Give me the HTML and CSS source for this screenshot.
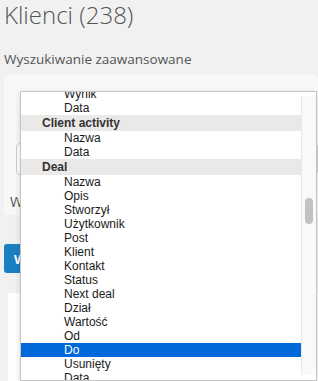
FILE: index.html
```html
<!DOCTYPE html>
<html lang="pl">
<head>
    <meta charset="UTF-8">
    <meta name="viewport" content="width=device-width, initial-scale=1.0">
    <title>Klienci</title>
    <link rel="stylesheet" href="styles.css">
</head>
<body>
    <div class="page">
        <h1 class="title">Klienci (238)</h1>
        <h2 class="subtitle">Wyszukiwanie zaawansowane</h2>
        <div class="search-panel">
            <div class="select-box"></div>
            <div class="field-label">Wartość</div>
        </div>
        <button class="search-btn">Wyszukaj</button>
        <div class="results"></div>
    </div>

    <div class="dropdown">
        <ul class="options">
            <li class="item">Wynik</li>
            <li class="item">Data</li>
            <li class="group">Client activity</li>
            <li class="item">Nazwa</li>
            <li class="item">Data</li>
            <li class="group">Deal</li>
            <li class="item">Nazwa</li>
            <li class="item">Opis</li>
            <li class="item">Stworzył</li>
            <li class="item">Użytkownik</li>
            <li class="item">Post</li>
            <li class="item">Klient</li>
            <li class="item">Kontakt</li>
            <li class="item">Status</li>
            <li class="item">Next deal</li>
            <li class="item">Dział</li>
            <li class="item">Wartość</li>
            <li class="item">Od</li>
            <li class="item selected">Do</li>
            <li class="item">Usunięty</li>
            <li class="item">Data</li>
        </ul>
        <div class="scrollbar"><div class="thumb"></div></div>
    </div>
</body>
</html>
```

FILE: styles.css
```css
body {
    margin: 0;
    background-color: #f1f1f1;
    font-family: "Open Sans", Arial, sans-serif;
    color: #555;
    overflow: hidden;
}
.page {
    padding: 0 0 0 4px;
}
.title {
    margin: 0;
    padding-top: 0;
    font-size: 24px;
    font-weight: 300;
    line-height: 30px;
    color: #555;
}
.subtitle {
    margin: 19px 0 0;
    font-size: 13.5px;
    font-weight: normal;
    line-height: 20px;
    color: #555;
}
.search-panel {
    margin-top: 6px;
    height: 140px;
    background: #f8f8f8;
    border-radius: 4px;
    padding: 68px 0 0 12px;
    box-sizing: border-box;
}
.select-box {
    height: 32px;
    border: 1px solid #ccc;
    border-radius: 4px;
    background: #fff;
    box-sizing: border-box;
}
.field-label {
    margin: 17px 0 0 -6px;
    font-size: 14px;
    line-height: 20px;
    color: #555;
}
.search-btn {
    display: block;
    margin-top: 29px;
    height: 29px;
    padding: 0 10px;
    border: none;
    border-radius: 3px;
    background-color: #1b80c2;
    color: #fff;
    font-family: "Open Sans", Arial, sans-serif;
    font-weight: bold;
    font-size: 13px;
}
.results {
    margin: 20px 0 0 4px;
    height: 120px;
    background: #fff;
}

/* open select list */
.dropdown {
    position: absolute;
    left: 20px;
    top: 91px;
    width: 297px;
    height: 290px;
    box-sizing: border-box;
    background: #fff;
    border: 1px solid #c4c4c4;
    box-shadow: 0 2px 6px rgba(0, 0, 0, 0.15);
    overflow: hidden;
    font-family: "Liberation Sans", Arial, sans-serif;
    font-size: 12px;
}
.options {
    list-style: none;
    margin: -5px 15px 0 0;
    padding: 0;
}
.options li {
    height: 14px;
    line-height: 14px;
    color: #1a1a1a;
    white-space: nowrap;
}
.options .item {
    padding-left: 43px;
}
.options .group {
    height: 16px;
    line-height: 16px;
    padding-left: 21px;
    font-weight: bold;
    color: #333;
    background: #ebe8e8;
}
.options .selected {
    background: #0068d9;
    color: #fff;
}
.scrollbar {
    position: absolute;
    right: 0;
    top: 4px;
    bottom: 5px;
    width: 15px;
    background: #f9f9f9;
    border-left: 1px solid #e8e8e8;
    box-sizing: border-box;
}
.thumb {
    position: absolute;
    left: 3px;
    top: 102px;
    width: 8px;
    height: 26px;
    border-radius: 4px;
    background: #c2c2c2;
}
```
